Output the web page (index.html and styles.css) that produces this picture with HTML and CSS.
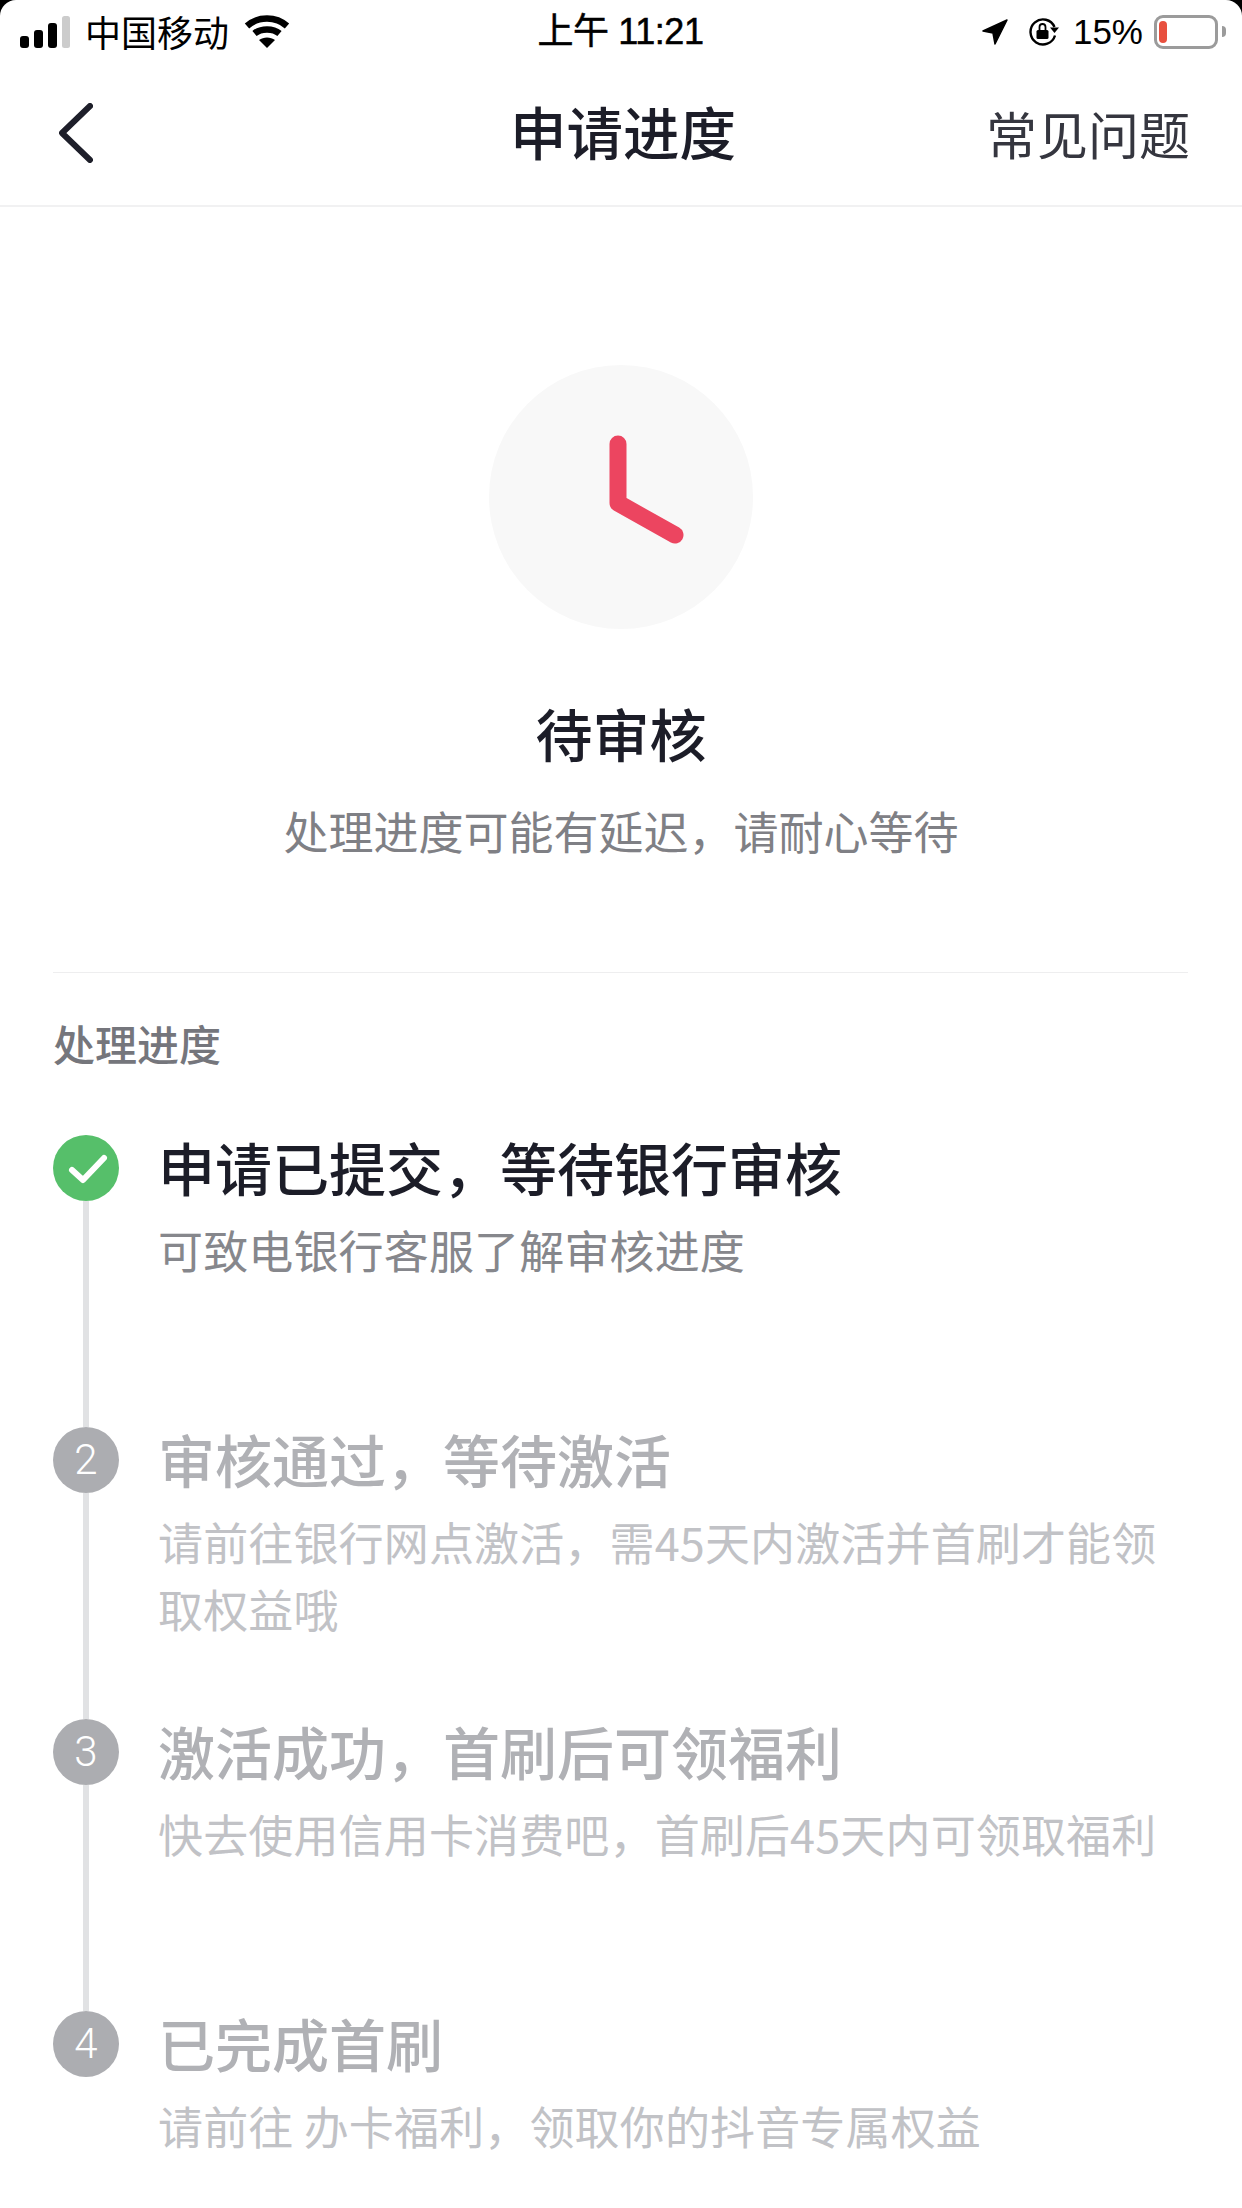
FILE: index.html
```html
<!DOCTYPE html>
<html>
<head>
  <meta charset="utf-8">
  <meta name="viewport" content="width=device-width">
  <title>申请进度</title>
  <link rel="stylesheet" href="styles.css">
</head>
<body>
<div class="page">
  <div class="status">
    <div class="status-left">
      <svg class="signal" width="50" height="32" viewBox="0 0 50 32">
        <rect x="0" y="20" width="9" height="12" rx="3" fill="#000"/>
        <rect x="14" y="14" width="9" height="18" rx="3" fill="#000"/>
        <rect x="28" y="7" width="9" height="25" rx="3" fill="#000"/>
        <rect x="42" y="0" width="8" height="32" rx="2.5" fill="#ccc"/>
      </svg>
      <span class="carrier">中国移动</span>
      <svg class="wifi" width="46" height="33" viewBox="0 0 46 33">
        <path d="M3 11C14 1 32 1 43 11" fill="none" stroke="#000" stroke-width="6.5"/>
        <path d="M10.5 18.5C17 13 29 13 35.5 18.5" fill="none" stroke="#000" stroke-width="6.5"/>
        <path d="M15 25C19.5 21.5 26.5 21.5 31 25L23 33Z" fill="#000"/>
      </svg>
    </div>
    <div class="clock-text">上午 11:21</div>
    <div class="status-right">
      <svg width="26" height="26" viewBox="0 0 26 26">
        <path d="M25 1L13 25L11 14L1 12Z" fill="#000" stroke="#000" stroke-width="1.5" stroke-linejoin="round"/>
      </svg>
      <svg class="rotlock" width="31" height="29" viewBox="0 0 31 29">
        <path d="M26.5 10A12.5 12.5 0 1 0 27 18.5" fill="none" stroke="#000" stroke-width="2.4"/>
        <path d="M22 10.5H31L26.5 16Z" fill="#000"/>
        <rect x="8.5" y="13" width="12" height="9" rx="1.5" fill="#000"/>
        <path d="M11.5 13V10A3 3 0 0 1 17.5 10V13" fill="none" stroke="#000" stroke-width="1.8"/>
      </svg>
      <span class="percent">15%</span>
      <div class="battery"><div class="battery-fill"></div></div>
      <div class="battery-nub"></div>
    </div>
  </div>

  <div class="nav">
    <svg class="back" width="34" height="60" viewBox="0 0 34 60">
      <path d="M31 3L3 30L31 57" fill="none" stroke="#1e1f2a" stroke-width="6" stroke-linecap="round" stroke-linejoin="round"/>
    </svg>
    <div class="nav-title">申请进度</div>
    <div class="nav-link">常见问题</div>
  </div>

  <div class="hero">
    <svg class="hero-icon" width="264" height="264" viewBox="0 0 264 264">
      <circle cx="132" cy="132" r="132" fill="#f8f8f8"/>
      <path d="M129 79V138L186 170" fill="none" stroke="#ec4560" stroke-width="17" stroke-linecap="round" stroke-linejoin="round"/>
    </svg>
    <div class="hero-title">待审核</div>
    <div class="hero-sub">处理进度可能有延迟，请耐心等待</div>
  </div>

  <div class="section">
    <div class="section-title">处理进度</div>
    <div class="steps">
      <div class="step step-done">
        <div class="rail">
          <div class="dot">
            <svg width="66" height="66" viewBox="0 0 66 66">
              <path d="M19 35L30 45L51 23" fill="none" stroke="#fff" stroke-width="6" stroke-linecap="round" stroke-linejoin="round"/>
            </svg>
          </div>
          <div class="line"></div>
        </div>
        <div class="step-body">
          <div class="step-title">申请已提交，等待银行审核</div>
          <div class="step-desc">可致电银行客服了解审核进度</div>
        </div>
      </div>
      <div class="step">
        <div class="rail">
          <div class="dot">2</div>
          <div class="line"></div>
        </div>
        <div class="step-body">
          <div class="step-title">审核通过，等待激活</div>
          <div class="step-desc">请前往银行网点激活，需45天内激活并首刷才能领取权益哦</div>
        </div>
      </div>
      <div class="step">
        <div class="rail">
          <div class="dot">3</div>
          <div class="line"></div>
        </div>
        <div class="step-body">
          <div class="step-title">激活成功，首刷后可领福利</div>
          <div class="step-desc">快去使用信用卡消费吧，首刷后45天内可领取福利</div>
        </div>
      </div>
      <div class="step">
        <div class="rail">
          <div class="dot">4</div>
        </div>
        <div class="step-body">
          <div class="step-title">已完成首刷</div>
          <div class="step-desc">请前往 办卡福利，领取你的抖音专属权益</div>
        </div>
      </div>
    </div>
  </div>
</div>
</body>
</html>
```

FILE: styles.css
```css
body {margin:0; background:#000; font-family:"Noto Sans CJK SC","Liberation Sans",sans-serif; color:#1c1d28;}
.page {width:1242px; height:2208px; overflow:hidden; background:#fff; border-radius:16px 16px 0 0;}

/* status bar */
.status {height:63px; display:flex; align-items:center; justify-content:space-between; padding:0 16px 0 20px; color:#000; font-size:36px;}
.status-left {display:flex; align-items:center; width:395px;}
.carrier {margin-left:15px; line-height:63px;}
.wifi {margin-left:15px;}
.clock-text {font-family:"Liberation Sans","Noto Sans CJK SC",sans-serif; font-size:36px; line-height:63px; letter-spacing:-0.4px; -webkit-text-stroke:0.5px #000;}
.status-right {display:flex; align-items:center; width:400px; justify-content:flex-end;}
.rotlock {margin-left:20px;}
.percent {font-family:"Liberation Sans",sans-serif; font-size:35px; margin-left:14px; line-height:63px;}
.battery {width:58px; height:28px; margin-left:11px; border:3px solid #9b9b9b; border-radius:9px; padding:0; display:flex; align-items:center;}
.battery-fill {width:8px; height:22px; margin-left:2px; background:#e8503f; border-radius:4px;}
.battery-nub {width:4px; height:11px; margin-left:4px; background:#9b9b9b; border-radius:0 4px 4px 0;}

/* nav */
.nav {height:142px; display:grid; grid-template-columns:1fr auto 1fr; align-items:center; padding:0 52px 0 59px; border-bottom:2px solid #f1f1f2;}
.back {margin-top:-2px;}
.nav-title {font-size:56.5px; font-weight:500; line-height:76px; margin-top:-8px; margin-left:-3px;}
.nav-link {font-size:51px; line-height:76px; color:#35363f; margin-top:-2px; justify-self:end;}

/* hero */
.hero {display:flex; flex-direction:column; align-items:center; padding-top:158px;}
.hero-title {font-size:57px; font-weight:500; line-height:76px; margin-top:65px;}
.hero-sub {font-size:45px; line-height:66px; margin-top:28px; color:#7f8085;}

/* steps */
.section {margin:108px 54px 0 53px; border-top:1px solid #eeeeef; padding-top:40px;}
.section-title {font-size:42px; font-weight:500; line-height:60px; color:#75767c;}
.steps {margin-top:62px;}
.step {display:flex; height:292px; gap:39px;}
.rail {width:66px; display:flex; flex-direction:column; align-items:center; flex-shrink:0;}
.dot {width:66px; height:66px; flex-shrink:0; border-radius:50%; background:#acadb1; color:#fff; font-family:Roboto,"Liberation Sans",sans-serif; font-weight:300; font-size:42px; line-height:66px; text-align:center;}
.dot svg {display:block;}
.line {width:6px; flex:1; background:#e1e2e4;}
.step-body {flex:1;}
.step-title {font-size:57px; font-weight:500; line-height:62px; color:#b0b1b5;}
.step-desc {font-size:45px; line-height:67px; margin-top:19px; letter-spacing:0.15px; color:#c1c2c6;}
.step-done .dot {background:#56bf6a;}
.step-done .step-title {color:#1c1d28;}
.step-done .step-desc {color:#86878c;}
```
